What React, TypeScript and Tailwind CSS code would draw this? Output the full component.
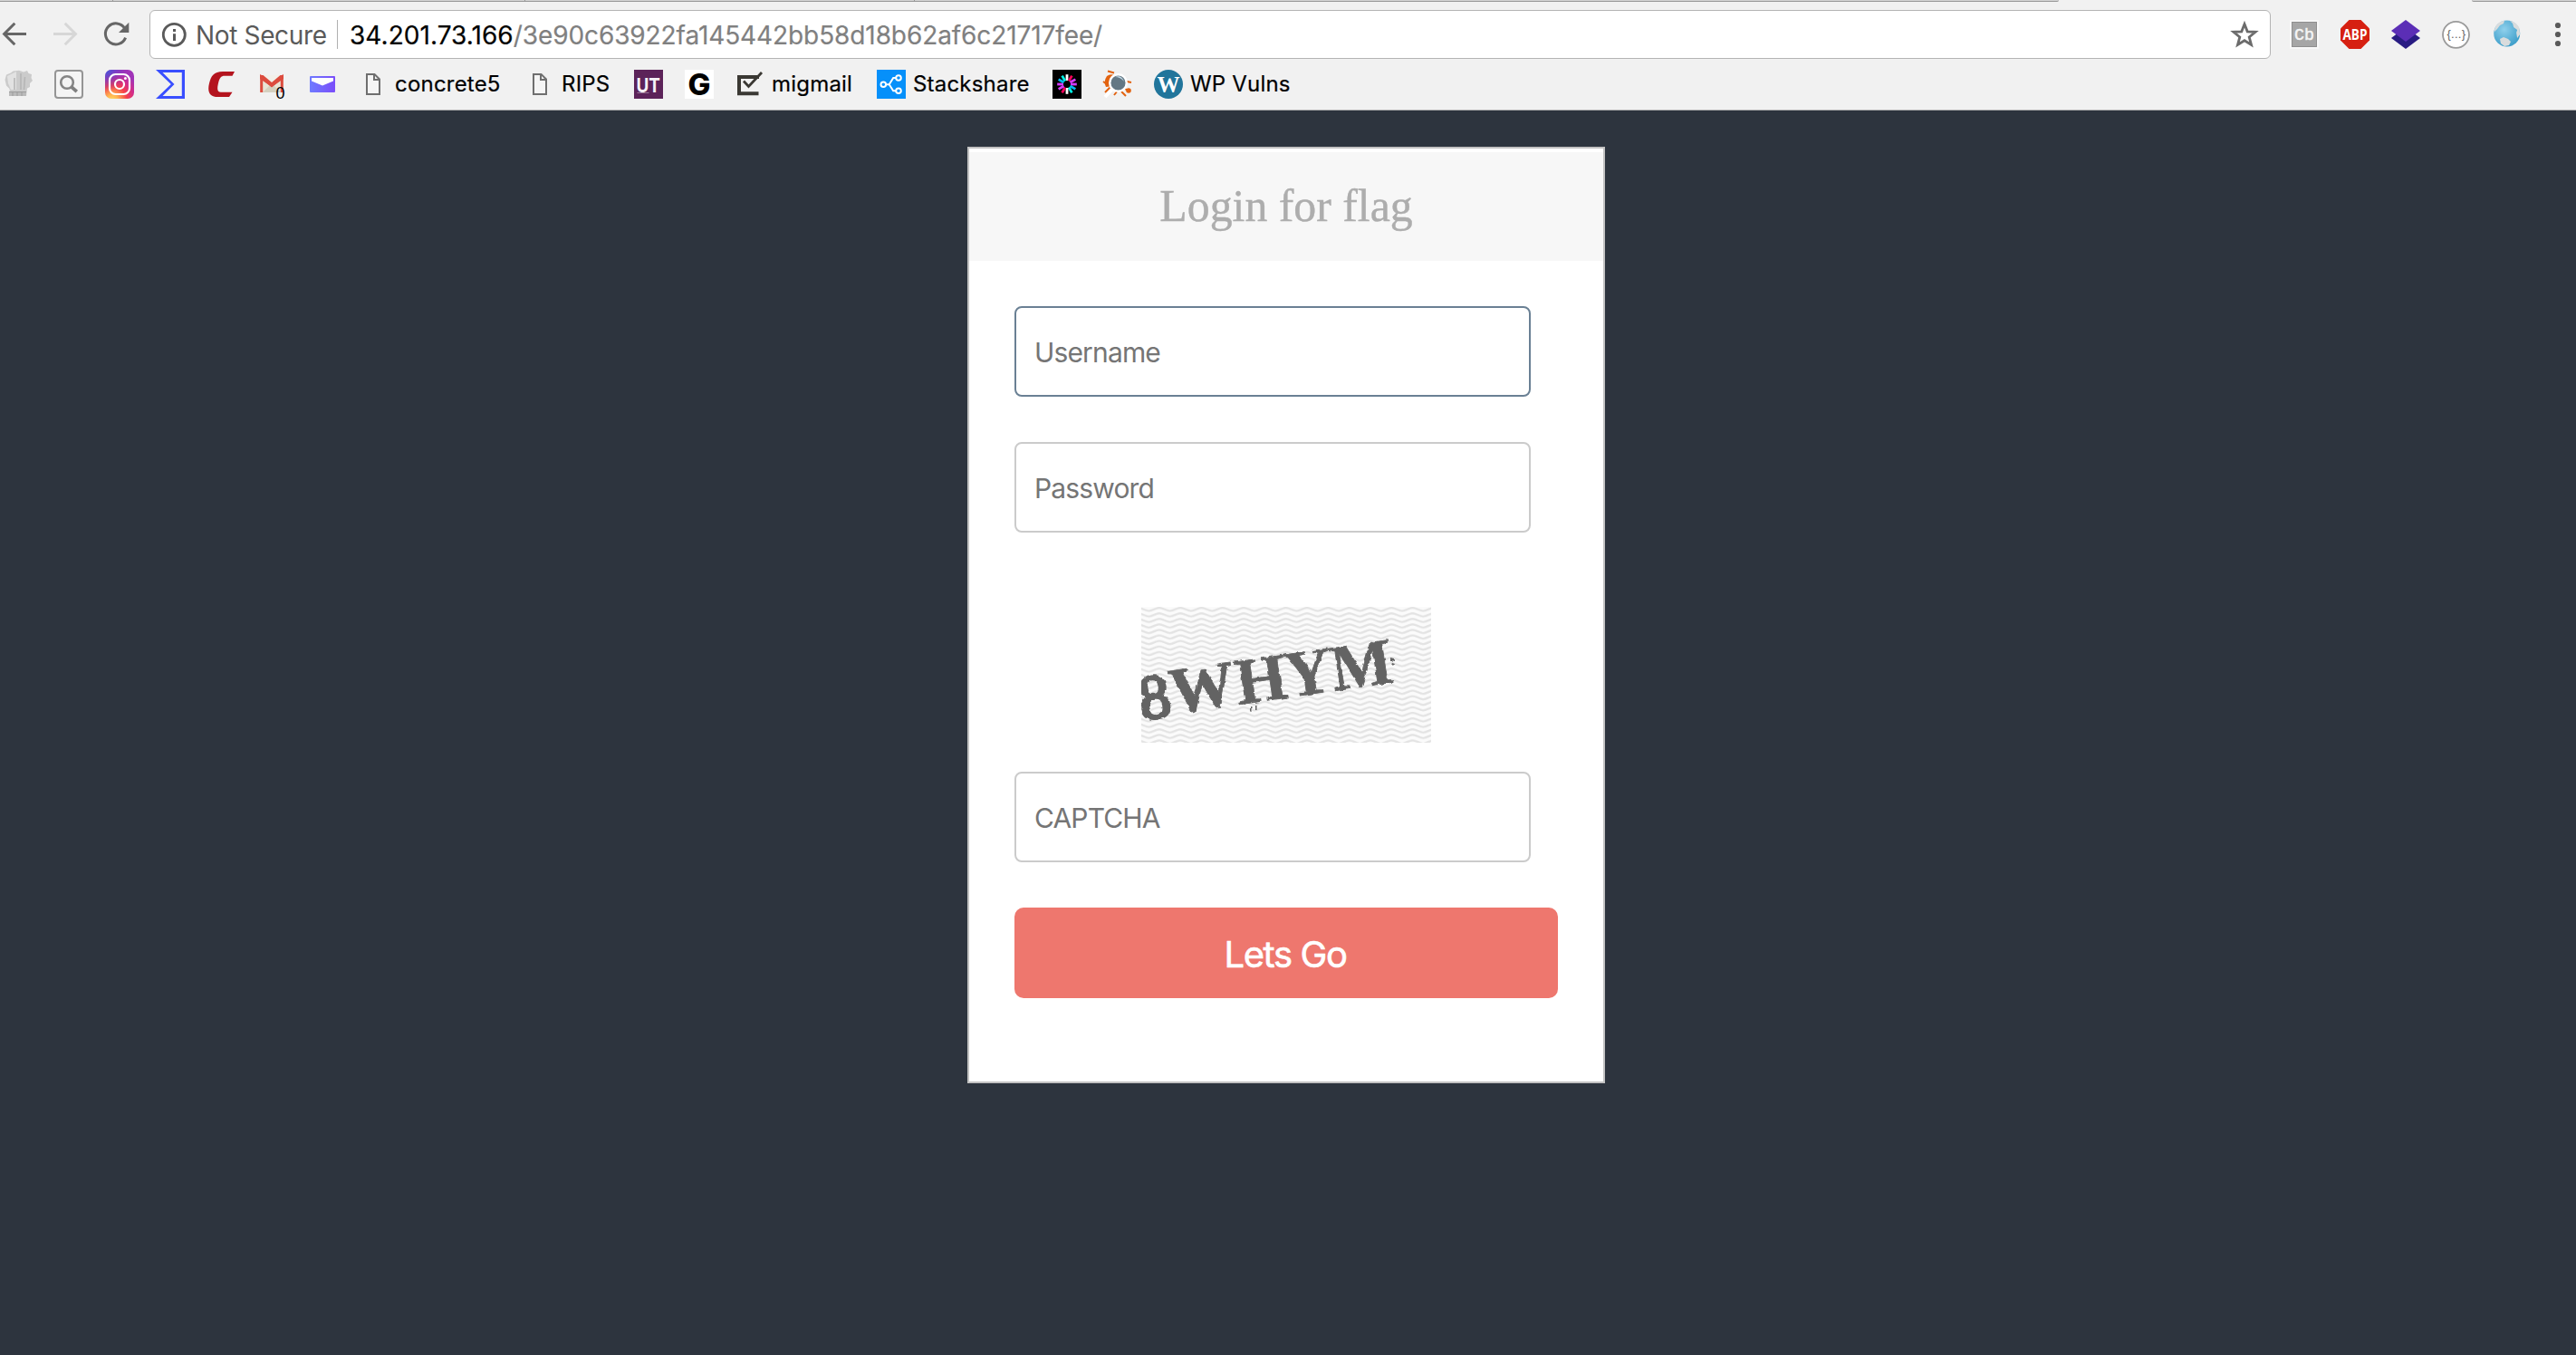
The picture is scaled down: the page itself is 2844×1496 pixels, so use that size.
import React from 'react';

function Icon({ children }: { children: React.ReactNode }) {
  return (
    <svg viewBox="0 0 32 32" className="size-8 shrink-0 overflow-visible" fill="none">
      {children}
    </svg>
  );
}

const BackIcon = () => (
  <Icon>
    <path d="M29 15.5H5M16.3 3.8L4.6 15.5l11.7 11.7" stroke="#666" strokeWidth="3" />
  </Icon>
);

const ForwardIcon = () => (
  <Icon>
    <path d="M3 15.5h24M15.7 3.8l11.7 11.7-11.7 11.7" stroke="#d7d7d7" strokeWidth="3" />
  </Icon>
);

const ReloadIcon = () => (
  <Icon>
    <path d="M25.6 9.2A11.5 11.5 0 1 0 26.6 19.6" stroke="#666" strokeWidth="3" />
    <path d="M30.3 2.8V14H19z" fill="#666" />
  </Icon>
);

const InfoIcon = () => (
  <Icon>
    <circle cx="16.3" cy="16.3" r="12" stroke="#5a5a5a" strokeWidth="2.8" />
    <path d="M16.5 10v3M16.5 15.2V23" stroke="#5a5a5a" strokeWidth="3" />
  </Icon>
);

const StarIcon = () => (
  <Icon>
    <path
      d="M16 4.6l3.2 8.2 8.9.5-6.9 5.6 2.3 8.6-7.5-4.8-7.5 4.8 2.3-8.6-6.9-5.6 8.9-.5z"
      stroke="#6b6b6b"
      strokeWidth="2.8"
    />
  </Icon>
);

const ChefIcon = () => (
  <Icon>
    <path
      d="M7 29L6.5 21 3 17.5 1.5 11 3 5.5 8 3.5 10.5 1.5 17 .8l5 1.7 4-1.5 1.5 3L31 5l-.5 4L32 12l-3 3v4l-3 1.5L25 29z"
      fill="#cbcbcb"
    />
    <path d="M4 7l5-2.5 5-2.5v20H8l-3-7z" fill="#e2e2e2" />
    <path d="M19 4v18M23.5 8l-1 14M12 9v13" stroke="#b5b5b5" strokeWidth="1.5" />
    <path d="M6 24h19v5H6z" fill="#bababa" />
    <path d="M6 24.5h19M10 25v4M15 25v4M20 25v4" stroke="#9c9c9c" />
  </Icon>
);

const SearchIcon = () => (
  <Icon>
    <rect x="1" y="1" width="30" height="30" rx="3" fill="#f4f4f4" stroke="#959595" strokeWidth="2" />
    <circle cx="14" cy="14" r="6.8" stroke="#858585" strokeWidth="2.6" />
    <path d="M18.8 18.8l6 5.4" stroke="#7f7f7f" strokeWidth="3.8" />
  </Icon>
);

const InstagramIcon = () => (
  <Icon>
    <defs>
      <radialGradient id="ig-warm" cx=".25" cy="1.05" r="1">
        <stop offset="0" stopColor="#ffdd63" />
        <stop offset=".2" stopColor="#ffb350" />
        <stop offset=".5" stopColor="#f5404a" />
        <stop offset=".75" stopColor="#d22c8a" />
        <stop offset="1" stopColor="#a034b8" />
      </radialGradient>
      <radialGradient id="ig-cool" cx="0" cy="0" r=".75">
        <stop offset="0" stopColor="#3b5bdc" />
        <stop offset="1" stopColor="#6a35d0" stopOpacity="0" />
      </radialGradient>
    </defs>
    <rect width="32" height="32" rx="7" fill="url(#ig-warm)" />
    <rect width="32" height="32" rx="7" fill="url(#ig-cool)" />
    <rect x="5" y="5" width="22" height="22" rx="6.5" stroke="#fff" strokeWidth="2.2" />
    <circle cx="16" cy="16" r="5" stroke="#fff" strokeWidth="2.2" />
    <circle cx="22.4" cy="9.6" r="1.5" fill="#fff" />
  </Icon>
);

const VirusTotalIcon = () => (
  <Icon>
    <path d="M0 0h32v32H0l16.8-16z" fill="#394eff" />
    <path d="M7.5 3h21.3v26H7.5L20.5 16z" fill="#f1f1f1" />
  </Icon>
);

const CIcon = () => (
  <Icon>
    <path
      d="M31 2H18C8 2 5 7 3 15 .5 25 4 30 12.5 30H25l3.5-5.2H16c-4 0-4.5-3-3.2-9C14.2 9 16 6.8 20 6.8H28.5z"
      fill="#b4141e"
    />
  </Icon>
);

const GmailIcon = () => (
  <Icon>
    <path d="M3 6h26v19H3z" fill="#e9e4d6" />
    <path d="M6 25L16 15l10 10z" fill="#d5d0bf" />
    <path d="M6 6h20L16 15z" fill="#f2f0ea" />
    <path d="M4.7 25V8L16 17.5 27.3 8v17" stroke="#dc4b3e" strokeWidth="3" />
    <path d="M3 6h3.5L16 14l9.5-8H29v4L16 19 3 10z" fill="#dc4b3e" />
    <text
      x="20.5"
      y="31.5"
      fontSize="19"
      textLength="10"
      lengthAdjust="spacingAndGlyphs"
      fill="#000"
      className="font-['Liberation_Sans',sans-serif]"
    >
      0
    </text>
  </Icon>
);

const MailIcon = () => (
  <Icon>
    <defs>
      <linearGradient id="mail">
        <stop offset="0" stopColor="#6f7bff" />
        <stop offset="1" stopColor="#7a4dfa" />
      </linearGradient>
    </defs>
    <rect x="2" y="7" width="28" height="18" rx="1" fill="url(#mail)" />
    <path d="M4 9h24v3.5L16 17.5 4 12.5z" fill="#fff" />
  </Icon>
);

const FileIcon = () => (
  <Icon>
    <path d="M9 5h8.5l5.5 5.5V27H9z" fill="#f5f5f5" stroke="#6f6f6f" strokeWidth="2" />
    <path d="M17 5v6h6" stroke="#6f6f6f" strokeWidth="2" />
  </Icon>
);

const UTIcon = () => (
  <Icon>
    <path d="M0 0h32v32H0z" fill="#5c2359" />
    <path d="M3.5 25.5h13" stroke="#9b7a99" />
    <text
      x="2.5"
      y="24.5"
      fontSize="22"
      fontWeight="700"
      textLength="26.5"
      lengthAdjust="spacingAndGlyphs"
      fill="#f6f2f6"
      className="font-[Inter,sans-serif]"
    >
      UT
    </text>
  </Icon>
);

const GIcon = () => (
  <Icon>
    <path d="M0 0h32v32H0z" fill="#fff" />
    <text
      x="3.5"
      y="28"
      fontSize="33"
      fontWeight="800"
      textLength="25"
      lengthAdjust="spacingAndGlyphs"
      fill="#000"
      className="font-[Inter,sans-serif]"
    >
      G
    </text>
  </Icon>
);

const MigmailIcon = () => (
  <Icon>
    <path d="M26 8H4v18.3h21.5" stroke="#3a3833" strokeWidth="4" />
    <path d="M9 12.5l5.5 6L29 3" stroke="#3a3833" strokeWidth="2.8" />
  </Icon>
);

const StackshareIcon = () => (
  <Icon>
    <path d="M0 0h32v32H0z" fill="#0690fa" />
    <g stroke="#fff" strokeWidth="2">
      <circle cx="7.3" cy="16.3" r="2.8" />
      <circle cx="24" cy="9" r="2.8" />
      <circle cx="24" cy="23.2" r="2.8" />
      <path d="M10.2 16.3h3.5L18.2 9h3M13.7 16.3l4.5 6.9h3" />
    </g>
  </Icon>
);

const RAYS = ['#fff', '#fb015b', '#d63aff', '#d63aff', '#00b9f1', '#00f2e6', '#fff', '#fb015b', '#d63aff', '#d63aff', '#00b9f1', '#00f2e6'];

const JwtIcon = () => (
  <Icon>
    <path d="M0 0h32v32H0z" fill="#000" />
    {RAYS.map((c, i) => (
      <path key={i} d="M16 12V5.2" stroke={c} strokeWidth="2.8" transform={`rotate(${i * 30} 16 16)`} />
    ))}
  </Icon>
);

const BugIcon = () => (
  <Icon>
    <path d="M4 7q4-3 8-1l-1 12-8 1q-3-6 1-12z" fill="#e2620f" />
    <path
      d="M5 1.5l7 2M0 13l4 3M2 25l6-6M12 28l4-5M20 24l5 5M26 13l5 1M24 21l5 3"
      stroke="#e2620f"
      strokeWidth="2"
    />
    <circle cx="28" cy="23" r="2.8" fill="#e2620f" />
    <circle cx="16.5" cy="14.5" r="9.3" fill="#647884" stroke="#fff" strokeWidth="2.5" />
    <path d="M13 8q7-3 10 5-4-5-10-5z" fill="#c3dbe8" />
    <path d="M9.5 22L2 30" stroke="#fff" strokeWidth="4" />
  </Icon>
);

const WordpressIcon = () => (
  <Icon>
    <circle cx="16" cy="16" r="16" fill="#21759b" />
    <text
      x="3.5"
      y="25"
      fontSize="26"
      fontWeight="700"
      textLength="25"
      lengthAdjust="spacingAndGlyphs"
      fill="#fff"
      className="font-['Liberation_Serif',serif]"
    >
      W
    </text>
  </Icon>
);

const CbIcon = () => (
  <Icon>
    <path d="M0 0h32v32H0z" fill="#f8f8f8" />
    <rect x="2.5" y="2.5" width="27" height="27" fill="#a6a6a6" stroke="#8f8f8f" />
    <text
      x="5"
      y="21.5"
      fontSize="19"
      textLength="22"
      lengthAdjust="spacingAndGlyphs"
      fill="#f5f5f5"
      stroke="#f5f5f5"
      strokeWidth=".5"
      className="font-['Liberation_Mono',monospace]"
    >
      Cb
    </text>
  </Icon>
);

const AbpIcon = () => (
  <Icon>
    <path d="M9.5 0h13L32 9.5v13L22.5 32h-13L0 22.5v-13z" fill="#d62011" />
    <text
      x="2.5"
      y="21.8"
      fontSize="16"
      fontWeight="700"
      textLength="27"
      lengthAdjust="spacingAndGlyphs"
      fill="#fff"
      className="font-['Open_Sans',sans-serif]"
    >
      ABP
    </text>
  </Icon>
);

const LayersIcon = () => (
  <Icon>
    <path d="M16 8l16 12-16 12L0 20z" fill="#281b82" />
    <path d="M16 0l16 12-16 12L0 12z" fill="#5b2eb6" />
  </Icon>
);

const BracesIcon = () => (
  <Icon>
    <circle cx="15.5" cy="16.3" r="14.5" fill="#fff" stroke="#9a9a9a" strokeWidth="1.8" />
    <text x="5.5" y="20" fontSize="13" textLength="20.5" fill="#666" className="font-['Liberation_Sans',sans-serif]">
      {'{...}'}
    </text>
  </Icon>
);

const GlobeIcon = () => (
  <Icon>
    <defs>
      <radialGradient id="globe" cx=".4" cy=".35" r=".7">
        <stop offset="0" stopColor="#8fd0ec" />
        <stop offset="1" stopColor="#3a9cc8" />
      </radialGradient>
    </defs>
    <circle cx="15.7" cy="15" r="14.5" fill="url(#globe)" />
    <path
      d="M2 13C2 7 6 2 13 .8L12 4 8 6 5 10zM19 1q7 1 10.5 8l.6 7-3 4-1-6 1-3-4-3-1-4zM8 21l4-2 5 2 3 3-2 4-5 1-4-3z"
      fill="#d9dcdd"
    />
  </Icon>
);

const MenuIcon = () => (
  <Icon>
    <g fill="#5a5a5a">
      <circle cx="16" cy="6" r="3.1" />
      <circle cx="16" cy="16" r="3.1" />
      <circle cx="16" cy="26" r="3.1" />
    </g>
  </Icon>
);

const BOOKMARKS: { icon: React.ReactNode; label?: string; width: string }[] = [
  { icon: <ChefIcon />, width: 'w-8' },
  { icon: <SearchIcon />, width: 'w-8' },
  { icon: <InstagramIcon />, width: 'w-8' },
  { icon: <VirusTotalIcon />, width: 'w-8' },
  { icon: <CIcon />, width: 'w-8' },
  { icon: <GmailIcon />, width: 'w-8' },
  { icon: <MailIcon />, width: 'w-8' },
  { icon: <FileIcon />, label: 'concrete5', width: 'w-40' },
  { icon: <FileIcon />, label: 'RIPS', width: 'w-24' },
  { icon: <UTIcon />, width: 'w-8' },
  { icon: <GIcon />, width: 'w-8' },
  { icon: <MigmailIcon />, label: 'migmail', width: 'w-[132px]' },
  { icon: <StackshareIcon />, label: 'Stackshare', width: 'w-[170px]' },
  { icon: <JwtIcon />, width: 'w-8' },
  { icon: <BugIcon />, width: 'w-8' },
  { icon: <WordpressIcon />, label: 'WP Vulns', width: 'w-40' },
];

function Browser() {
  return (
    <header className="flex h-[122px] flex-col border-b border-[#b0b0b0] bg-[#f1f1f1]">
      <div className="flex h-0.5 shrink-0 justify-between">
        <div className="flex w-[2273px] rounded-br-sm border-b border-[#989898] bg-[#d5d5d5]">
          <i className="ml-[124px] h-px w-px bg-[#989898]" />
          <i className="ml-[454px] h-px w-px bg-[#989898]" />
          <i className="ml-[429px] h-px w-px bg-[#989898]" />
        </div>
        <div className="w-[115px] rounded-bl-sm border-b border-[#989898] bg-[#d5d5d5]" />
      </div>
      <div className="mt-[9px] flex h-[54px] shrink-0 items-center">
        <div className="flex w-[165px] shrink-0 gap-6">
          <BackIcon />
          <ForwardIcon />
          <ReloadIcon />
        </div>
        <div className="flex h-full w-[2342px] items-center rounded-md border border-[#b4b4b4] bg-white pl-2.5">
          <InfoIcon />
          <span className="ml-2 w-[156px] whitespace-pre pt-0.5 text-[28px] leading-none tracking-[-0.35px] text-[#5a5a5a]">
            Not Secure
          </span>
          <i className="h-8 w-px bg-[#b0b0b0]" />
          <p className="ml-[13px] flex grow pt-0.5 text-[28px] leading-none text-[#808080]">
            <span className="tracking-[0.05px] text-black [-webkit-text-stroke:0.2px_black]">34.201.73.166</span>
            <span className="tracking-[-0.1px] [-webkit-text-stroke:0.2px_#808080]">
              /3e90c63922fa145442bb58d18b62af6c21717fee/
            </span>
          </p>
          <div className="mr-3">
            <StarIcon />
          </div>
        </div>
        <div className="ml-[21px] flex gap-6">
          <CbIcon />
          <AbpIcon />
          <LayersIcon />
          <BracesIcon />
          <GlobeIcon />
          <MenuIcon />
        </div>
      </div>
      <nav className="mt-3 flex gap-6 pl-1">
        {BOOKMARKS.map((b, i) => (
          <a key={i} className={`flex h-8 items-center gap-2 ${b.width}`}>
            {b.icon}
            {b.label && (
              <span className="whitespace-pre text-2xl leading-none tracking-[0.2px] text-black [-webkit-text-stroke:0.2px_black]">
                {b.label}
              </span>
            )}
          </a>
        ))}
      </nav>
    </header>
  );
}

const CAPTCHA_GLYPHS = [
  { c: '8', x: 1, y: 125, weight: 400, stroke: 3, size: 69 },
  { c: 'W', x: 35, y: 118, weight: 700, stroke: 0.8, size: 72 },
  { c: 'H', x: 108, y: 108, weight: 700, stroke: 0.8, size: 72 },
  { c: 'Y', x: 162, y: 100, weight: 700, stroke: 0.8, size: 72 },
  { c: 'M', x: 213, y: 93, weight: 700, stroke: 0.8, size: 72 },
];

function Captcha() {
  return (
    <svg viewBox="0 0 320 150" className="h-[150px] w-[320px]">
      <defs>
        <pattern id="waves" width="23.3" height="6.1" patternUnits="userSpaceOnUse" x="8.3">
          <path
            d="M-1 -1.5C4 -1.5 7 -5 11.65 -5S19 -1.5 24.3 -1.5M-1 4.6C4 4.6 7 1.1 11.65 1.1S19 4.6 24.3 4.6M-1 10.7C4 10.7 7 7.2 11.65 7.2S19 10.7 24.3 10.7"
            fill="none"
            stroke="#e3e3e3"
            strokeWidth="2.3"
          />
        </pattern>
        <filter id="rough" x="-5%" y="-5%" width="110%" height="110%">
          <feTurbulence type="fractalNoise" baseFrequency=".16" numOctaves="2" seed="4" result="n" />
          <feDisplacementMap in="SourceGraphic" in2="n" scale="4" xChannelSelector="R" yChannelSelector="G" />
          <feGaussianBlur stdDeviation=".6" />
        </filter>
      </defs>
      <path d="M0 0h320v150H0z" fill="#fbfbfb" />
      <path d="M0 0h320v150H0z" fill="url(#waves)" />
      <g filter="url(#rough)" fill="#646464" className="font-['Liberation_Serif',serif]">
        {CAPTCHA_GLYPHS.map((g) => (
          <text
            key={g.c}
            fontSize={g.size}
            fontWeight={g.weight}
            stroke="#646464"
            strokeWidth={g.stroke}
            transform={`translate(${g.x} ${g.y}) rotate(-8.5)`}
          >
            {g.c}
          </text>
        ))}
        <path d="M275 56l4 1v3l-4-1zM277 62l3 1-2 3-2-2zM121 109h1.5v7H121zM125 108h1.5v6H125z" />
      </g>
    </svg>
  );
}

const field =
  'block h-[100px] w-[570px] rounded-lg border-2 bg-white pl-5 pt-0.5 text-[30px] tracking-[-0.85px] text-[#757575] placeholder:text-[#757575] outline-none';

export default function App() {
  return (
    <div className="flex h-[1496px] w-[2844px] flex-col overflow-hidden bg-[#2d343e] font-[Inter,Roboto,sans-serif]">
      <Browser />
      <main className="flex grow flex-col items-center pr-1 pt-10">
        <form className="h-[1034px] w-[704px] border-2 border-[#c2c2c2] bg-white pt-1">
          <h1 className="flex h-[120px] items-center justify-center bg-[#f7f7f7] font-['Liberation_Serif',serif] text-[49.8px] leading-none text-[#adadad] [-webkit-text-stroke:0.4px_#adadad]">
            Login for flag
          </h1>
          <div className="flex flex-col px-[50px] pt-[50px]">
            <input className={`${field} border-[#6a8094]`} placeholder="Username" />
            <input className={`${field} mt-[50px] border-[#cbcbcb]`} placeholder="Password" />
            <div className="mt-[82px] flex justify-center">
              <Captcha />
            </div>
            <input className={`${field} mt-8 border-[#cbcbcb]`} placeholder="CAPTCHA" />
            <button
              type="button"
              className="mt-[50px] h-[100px] w-[600px] rounded-[10px] bg-[#ee776e] pr-0.5 pt-[3px] text-[40px] tracking-[-1.4px] text-white [-webkit-text-stroke:0.6px_white]"
            >
              Lets Go
            </button>
          </div>
        </form>
      </main>
    </div>
  );
}
